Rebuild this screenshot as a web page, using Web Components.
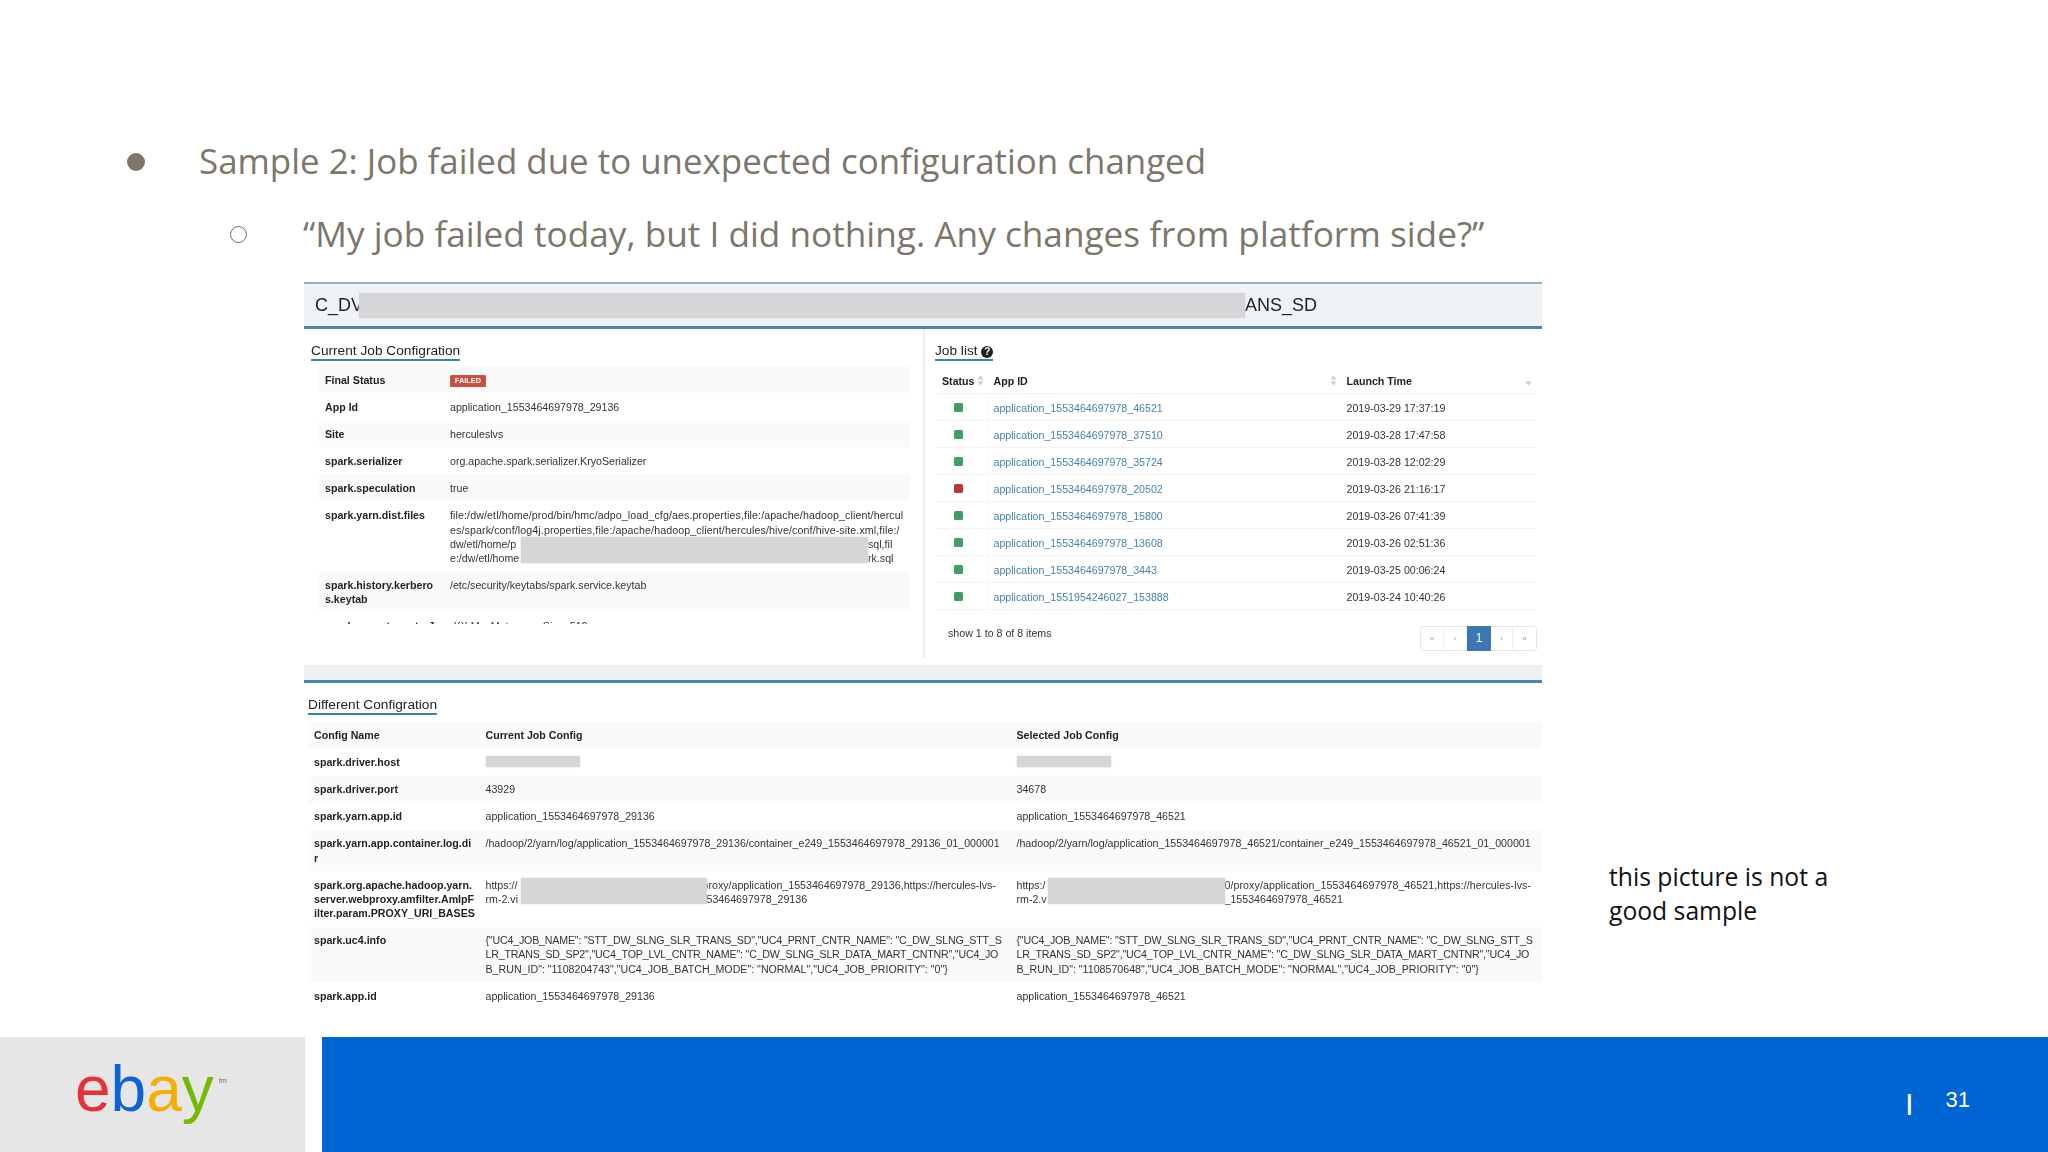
<!DOCTYPE html>
<html lang="en">
<head>
<meta charset="utf-8">
<title>Sample 2</title>
<style>
  html, body { margin: 0; background: #ffffff; }
  .tight { letter-spacing: -0.18px; }
  .loose { letter-spacing: 0.11px; }
</style>
</head>
<body>
<sm-slide>
  <sm-bullet level="1">Sample 2: Job failed due to unexpected configuration changed</sm-bullet>
  <sm-bullet level="2">“My job failed today, but I did nothing. Any changes from platform side?”</sm-bullet>

  <sm-stage>
    <sm-panel>
      <sm-banner>
        <span>C_DV</span>
        <sm-redact slot="mask"></sm-redact>
        <span slot="end">ANS_SD</span>
      </sm-banner>

      <sm-split>
        <sm-pane slot="left">
          <sm-title>Current Job Configration</sm-title>
          <sm-table clip style="--columns: 125px 1fr; --pad-t: 7.35px; --pad-b: 5.35px; margin: 5px 0 0 8px; width: 591px;">
            <sm-row band><sm-cell strong>Final Status</sm-cell><sm-cell><sm-badge>FAILED</sm-badge></sm-cell></sm-row>
            <sm-row><sm-cell strong>App Id</sm-cell><sm-cell>application_1553464697978_29136</sm-cell></sm-row>
            <sm-row band><sm-cell strong>Site</sm-cell><sm-cell>herculeslvs</sm-cell></sm-row>
            <sm-row><sm-cell strong>spark.serializer</sm-cell><sm-cell>org.apache.spark.serializer.KryoSerializer</sm-cell></sm-row>
            <sm-row band><sm-cell strong>spark.speculation</sm-cell><sm-cell>true</sm-cell></sm-row>
            <sm-row>
              <sm-cell strong>spark.yarn.dist.files</sm-cell>
              <sm-cell nowrap><span class="loose">file:/dw/etl/home/prod/bin/hmc/adpo_load_cfg/aes.properties,file:/apache/hadoop_client/hercul<br>es/spark/conf/log4j.properties,file:/apache/hadoop_client/hercules/hive/conf/hive-site.xml,file:/</span><sm-masked style="--mask: 71px 347px auto;">
                <span>dw/etl/home/p</span><sm-redact tall></sm-redact><span>sql,fil</span>
                <span>e:/dw/etl/home</span><span>rk.sql</span>
              </sm-masked></sm-cell>
            </sm-row>
            <sm-row band><sm-cell strong>spark.history.kerbero<br>s.keytab</sm-cell><sm-cell>/etc/security/keytabs/spark.service.keytab</sm-cell></sm-row>
            <sm-row><sm-cell strong>spark.executor.extraJavaO</sm-cell><sm-cell>-XX:MaxMetaspaceSize=512m -</sm-cell></sm-row>
          </sm-table>
        </sm-pane>

        <sm-pane slot="right">
          <sm-title>Job list <sm-help></sm-help></sm-title>
          <sm-table style="--columns: 52.5px 353px 1fr; margin-top: 6.5px; width: 602px;">
            <sm-row rule>
              <sm-cell strong between style="--pad-l: 7px; --pad-r: 4px;">Status<sm-sort></sm-sort></sm-cell>
              <sm-cell strong between style="--pad-r: 4px;">App ID<sm-sort></sm-sort></sm-cell>
              <sm-cell strong between style="--pad-r: 5px;">Launch Time<sm-sort down></sm-sort></sm-cell>
            </sm-row>
            <sm-job-row app="application_1553464697978_46521" time="2019-03-29 17:37:19"></sm-job-row>
            <sm-job-row app="application_1553464697978_37510" time="2019-03-28 17:47:58"></sm-job-row>
            <sm-job-row app="application_1553464697978_35724" time="2019-03-28 12:02:29"></sm-job-row>
            <sm-job-row app="application_1553464697978_20502" time="2019-03-26 21:16:17" failed></sm-job-row>
            <sm-job-row app="application_1553464697978_15800" time="2019-03-26 07:41:39"></sm-job-row>
            <sm-job-row app="application_1553464697978_13608" time="2019-03-26 02:51:36"></sm-job-row>
            <sm-job-row app="application_1553464697978_3443" time="2019-03-25 00:06:24"></sm-job-row>
            <sm-job-row app="application_1551954246027_153888" time="2019-03-24 10:40:26"></sm-job-row>
          </sm-table>
          <sm-table-foot>
            <span>show 1 to 8 of 8 items</span>
            <sm-pager slot="end"></sm-pager>
          </sm-table-foot>
        </sm-pane>
      </sm-split>

      <sm-section>
        <sm-title>Different Configration</sm-title>
        <sm-table style="--columns: 171.5px 531px 531px; margin-top: 7px;">
          <sm-row band><sm-cell strong>Config Name</sm-cell><sm-cell strong>Current Job Config</sm-cell><sm-cell strong>Selected Job Config</sm-cell></sm-row>
          <sm-row>
            <sm-cell strong>spark.driver.host</sm-cell>
            <sm-cell><sm-redact style="width: 94px; height: 11px; margin-top: 1px;"></sm-redact></sm-cell>
            <sm-cell><sm-redact style="width: 94px; height: 11px; margin-top: 1px;"></sm-redact></sm-cell>
          </sm-row>
          <sm-row band><sm-cell strong>spark.driver.port</sm-cell><sm-cell>43929</sm-cell><sm-cell>34678</sm-cell></sm-row>
          <sm-row><sm-cell strong>spark.yarn.app.id</sm-cell><sm-cell>application_1553464697978_29136</sm-cell><sm-cell>application_1553464697978_46521</sm-cell></sm-row>
          <sm-row band>
            <sm-cell strong>spark.yarn.app.container.log.di<br>r</sm-cell>
            <sm-cell>/hadoop/2/yarn/log/application_1553464697978_29136/container_e249_1553464697978_29136_01_000001</sm-cell>
            <sm-cell>/hadoop/2/yarn/log/application_1553464697978_46521/container_e249_1553464697978_46521_01_000001</sm-cell>
          </sm-row>
          <sm-row>
            <sm-cell strong>spark.org.apache.hadoop.yarn.<br>server.webproxy.amfilter.AmIpF<br>ilter.param.PROXY_URI_BASES</sm-cell>
            <sm-cell><sm-masked style="--mask: 35px 186px auto;">
              <span>https://</span><sm-redact tall></sm-redact><span style="margin-left: -4px;">proxy/application_1553464697978_29136,https://hercules-lvs-</span>
              <span>rm-2.vi</span><span>53464697978_29136</span>
            </sm-masked></sm-cell>
            <sm-cell><sm-masked style="--mask: 31px 177px auto;">
              <span>https:/</span><sm-redact tall></sm-redact><span style="letter-spacing: 0.07px;">0/proxy/application_1553464697978_46521,https://hercules-lvs-</span>
              <span>rm-2.v</span><span>_1553464697978_46521</span>
            </sm-masked></sm-cell>
          </sm-row>
          <sm-row band>
            <sm-cell strong>spark.uc4.info</sm-cell>
            <sm-cell nowrap><span class="tight">{"UC4_JOB_NAME": "STT_DW_SLNG_SLR_TRANS_SD","UC4_PRNT_CNTR_NAME": "C_DW_SLNG_STT_S<br>LR_TRANS_SD_SP2","UC4_TOP_LVL_CNTR_NAME": "C_DW_SLNG_SLR_DATA_MART_CNTNR","UC4_JO</span><br>B_RUN_ID": "1108204743","UC4_JOB_BATCH_MODE": "NORMAL","UC4_JOB_PRIORITY": "0"}</sm-cell>
            <sm-cell nowrap><span class="tight">{"UC4_JOB_NAME": "STT_DW_SLNG_SLR_TRANS_SD","UC4_PRNT_CNTR_NAME": "C_DW_SLNG_STT_S<br>LR_TRANS_SD_SP2","UC4_TOP_LVL_CNTR_NAME": "C_DW_SLNG_SLR_DATA_MART_CNTNR","UC4_JO</span><br>B_RUN_ID": "1108570648","UC4_JOB_BATCH_MODE": "NORMAL","UC4_JOB_PRIORITY": "0"}</sm-cell>
          </sm-row>
          <sm-row><sm-cell strong>spark.app.id</sm-cell><sm-cell>application_1553464697978_29136</sm-cell><sm-cell>application_1553464697978_46521</sm-cell></sm-row>
        </sm-table>
      </sm-section>
    </sm-panel>

    <sm-note slot="note">this picture is not a<br>good sample</sm-note>
  </sm-stage>

  <sm-footer slot="footer" page="31"></sm-footer>
</sm-slide>

<script>
// Small helper, every element is only a template and a shadow root
function element( name, html, extra ) {
  const template = document.createElement( 'template' );
  template.innerHTML = html;

  class Base extends HTMLElement {
    constructor() {
      super();
      this.attachShadow( {mode: 'open'} );
      this.shadowRoot.appendChild( template.content.cloneNode( true ) );
    }

    connectedCallback() {
      if( extra ) extra( this );
    }
  }

  window.customElements.define( name, Base );
}

element( 'sm-slide', /* template */ `
  <style>
    :host {
      display: flex;
      flex-direction: column;
      height: 1152px;
      overflow: hidden;
      padding-top: 136px;
      box-sizing: border-box;
      background: #ffffff;
    }
    main { flex: 1; min-height: 0; }
  </style>
  <main><slot></slot></main>
  <slot name="footer"></slot>
` );

element( 'sm-bullet', /* template */ `
  <style>
    :host {
      display: flex;
      align-items: center;
      color: #7d766a;
      font-family: "Open Sans", sans-serif;
      height: 50px;
      line-height: 50px;
      white-space: nowrap;
    }
    :host( [level="1"] ) { font-size: 34.9px; padding-left: 127px; margin-bottom: 22px; }
    :host( [level="2"] ) { font-size: 35.2px; padding-left: 230px; margin-bottom: 24px; }
    i { box-sizing: border-box; border-radius: 50%; flex: none; }
    :host( [level="1"] ) i { width: 18px; height: 18px; background: #7d766a; margin: 2px 54px 0 0; }
    :host( [level="2"] ) i { width: 17px; height: 17px; border: 1px solid #6f695f; margin: 2px 56px 0 0; }
  </style>
  <i></i><slot></slot>
` );

element( 'sm-stage', /* template */ `
  <style>
    :host { display: flex; align-items: flex-start; padding-left: 304px; }
    div { margin: 578px 0 0 67px; }
  </style>
  <slot></slot>
  <div><slot name="note"></slot></div>
` );

element( 'sm-panel', /* template */ `
  <style>
    :host {
      display: block;
      width: 1238px;
      flex: none;
      color: #333333;
      font-family: "Liberation Sans", Arial, sans-serif;
      font-size: 10.65px;
      line-height: 14.3px;
      filter: blur( 0.35px );
    }
  </style>
  <slot></slot>
` );

element( 'sm-banner', /* template */ `
  <style>
    :host {
      display: flex;
      box-sizing: border-box;
      height: 47px;
      align-items: center;
      background: #eef3f7;
      border-top: 2px solid #8fb2ca;
      border-bottom: 3px solid #4f83aa;
      color: #222222;
      font-size: 18px;
      line-height: 24px;
      padding-left: 11px;
    }
    .lead { width: 44px; overflow: hidden; white-space: nowrap; }
    .mask { width: 886px; flex: none; }
    .mask ::slotted( * ) { height: 25px; }
  </style>
  <div class="lead"><slot></slot></div>
  <div class="mask"><slot name="mask"></slot></div>
  <slot name="end"></slot>
` );

element( 'sm-split', /* template */ `
  <style>
    :host { display: flex; height: 336px; }
    .left { width: 619px; height: 329px; flex: none; border-right: 2px solid #eeeeee; }
    .right { flex: 1; min-width: 0; }
  </style>
  <div class="left"><slot name="left"></slot></div>
  <div class="right"><slot name="right"></slot></div>
` );

element( 'sm-pane', /* template */ `
  <style>
    :host { display: block; padding: 14px 0 0 7px; }
    :host( [slot="right"] ) { padding-left: 10px; }
  </style>
  <slot></slot>
` );

element( 'sm-section', /* template */ `
  <style>
    :host {
      display: block;
      border-top: 15px solid #eef1f4;
      padding: 0 0 0 4px;
    }
    hr { border: 0; height: 3px; background: #4f83aa; margin: 0 0 14px -4px; }
  </style>
  <hr>
  <slot></slot>
` );

element( 'sm-title', /* template */ `
  <style>
    :host {
      display: table;
      color: #222222;
      font-size: 13.7px;
      line-height: 16px;
      border-bottom: 2px solid #3583b0;
      white-space: nowrap;
    }
  </style>
  <slot></slot>
` );

element( 'sm-help', /* template */ `
  <style>
    :host {
      display: inline-block;
      width: 12px;
      height: 12px;
      border-radius: 50%;
      background: #222222;
      color: #ffffff;
      font-size: 10px;
      font-weight: bold;
      line-height: 12px;
      text-align: center;
      vertical-align: 0;
    }
  </style>
  ?
` );

element( 'sm-table', /* template */ `
  <style>
    :host { display: block; }
    :host( [clip] ) { height: 258px; overflow: hidden; }
  </style>
  <slot></slot>
` );

element( 'sm-row', /* template */ `
  <style>
    :host { display: grid; grid-template-columns: var( --columns ); }
    :host( [band] ) { background: #fafafa; }
    :host( [rule] ) { box-shadow: inset 0 -1px 0 #f4f4f4; }
  </style>
  <slot></slot>
` );

element( 'sm-cell', /* template */ `
  <style>
    :host {
      display: block;
      min-width: 0;
      padding: var( --pad-t, 6.35px ) var( --pad-r, 4px ) var( --pad-b, 6.35px ) var( --pad-l, 6px );
      overflow-wrap: anywhere;
    }
    :host( [strong] ) { color: #222222; font-weight: bold; }
    :host( [between] ) { display: flex; align-items: center; justify-content: space-between; }
    :host( [center] ) { display: flex; align-items: center; justify-content: center; }
    :host( [rule] ) { box-shadow: inset -1px 0 0 #f6f6f6; }
    :host( [link] ) { color: #4583ad; }
    :host( [nowrap] ) { white-space: nowrap; }
  </style>
  <slot></slot>
` );

// One job of the list, the cells are built from its attributes
element( 'sm-job-row', /* template */ `
  <style>
    :host { display: block; }
    .status { --pad-l: 4px; --pad-r: 9px; }
  </style>
  <sm-row rule>
    <sm-cell class="status" center rule><sm-status></sm-status></sm-cell>
    <sm-cell link></sm-cell>
    <sm-cell></sm-cell>
  </sm-row>
`, ( host ) => {
  const cells = host.shadowRoot.querySelectorAll( 'sm-cell' );
  cells[1].textContent = host.getAttribute( 'app' );
  cells[2].textContent = host.getAttribute( 'time' );

  if( host.hasAttribute( 'failed' ) ) {
    host.shadowRoot.querySelector( 'sm-status' ).setAttribute( 'failed', '' );
  }
} );

element( 'sm-status', /* template */ `
  <style>
    :host { display: block; width: 9px; height: 9px; border-radius: 1.5px; background: #3f9e63; }
    :host( [failed] ) { background: #b8392c; }
  </style>
` );

element( 'sm-sort', /* template */ `
  <style>
    :host { display: block; flex: none; width: 7px; height: 11px; }
    svg { display: block; }
    :host( [down] ) .up { display: none; }
  </style>
  <svg width="7" height="11" viewBox="0 0 7 11" fill="#c9cbce">
    <path class="up" d="M3.5 0.5 L6.5 4.5 L0.5 4.5 Z"></path>
    <path d="M0.5 6.5 L6.5 6.5 L3.5 10.5 Z"></path>
  </svg>
` );

element( 'sm-badge', /* template */ `
  <style>
    :host {
      display: block;
      width: 36px;
      height: 12px;
      border-radius: 1.5px;
      background: #cb4f3e;
      color: #ffffff;
      font-size: 7.4px;
      font-weight: bold;
      line-height: 12px;
      text-align: center;
      margin-top: 2px;
    }
  </style>
  <slot></slot>
` );

element( 'sm-redact', /* template */ `
  <style>
    :host {
      display: block;
      position: relative;
      z-index: 1;
      background: #d6d6d8;
      box-shadow: 0 0 2px #dcdcde;
    }
    :host( [tall] ) { grid-row: span 2; height: 26px; }
  </style>
` );

// Two lines of text with a grey box laid over the middle of them
element( 'sm-masked', /* template */ `
  <style>
    :host {
      display: grid;
      grid-template-columns: var( --mask );
      grid-auto-rows: 14.3px;
      white-space: nowrap;
    }
    ::slotted( span ) { overflow: hidden; }
  </style>
  <slot></slot>
` );

element( 'sm-table-foot', /* template */ `
  <style>
    :host {
      display: flex;
      justify-content: space-between;
      padding: 16px 0 0 13px;
      width: 589px;
    }
  </style>
  <slot></slot>
  <slot name="end"></slot>
` );

element( 'sm-pager', /* template */ `
  <style>
    :host {
      display: flex;
      height: 25px;
      box-sizing: border-box;
      border: 1px solid #e6e6e6;
      border-radius: 3px;
      color: #9a9a9a;
      font-size: 8px;
      line-height: 23px;
      text-align: center;
    }
    span { box-sizing: border-box; border-right: 1px solid #eeeeee; }
    span:last-child { border-right: 0; }
    .active {
      background: #3c78b4;
      border: 0;
      color: #ffffff;
      font-size: 12px;
      margin: -1px 0;
      line-height: 25px;
    }
  </style>
  <span style="width: 23px;">«</span>
  <span style="width: 23px;">‹</span>
  <span class="active" style="width: 24px;">1</span>
  <span style="width: 22px;">›</span>
  <span style="width: 23px;">»</span>
` );

element( 'sm-note', /* template */ `
  <style>
    :host {
      display: block;
      color: #111111;
      font-family: "Open Sans", sans-serif;
      font-size: 24.7px;
      line-height: 34px;
      white-space: nowrap;
    }
  </style>
  <slot></slot>
` );

element( 'sm-logo', /* template */ `
  <style>
    :host {
      display: block;
      color: #e53238;
      font-family: "Liberation Sans", Arial, sans-serif;
      font-size: 64px;
      line-height: 64px;
      padding: 20px 0 0 75px;
      white-space: nowrap;
    }
    .b { color: #0e64d2; }
    .a { color: #f5af02; }
    .y { color: #76b900; }
    sup {
      color: #777777;
      font-size: 7px;
      line-height: 0;
      vertical-align: 28px;
      margin-left: 5px;
    }
  </style>
  <span>e</span><span class="b">b</span><span class="a">a</span><span class="y">y</span><sup>tm</sup>
` );

element( 'sm-footer', /* template */ `
  <style>
    :host { display: flex; height: 115px; flex: none; }
    .brand { width: 305px; background: #e6e6e6; margin-right: 17px; flex: none; }
    .bar {
      flex: 1;
      display: flex;
      justify-content: flex-end;
      background: #0064d2;
      color: #ffffff;
      font-family: "Liberation Sans", Arial, sans-serif;
      font-size: 22px;
      line-height: 26px;
      padding: 50px 78px 0 0;
    }
    .sep { font-weight: bold; margin: 3px 33px 0 0; }
  </style>
  <div class="brand"><sm-logo></sm-logo></div>
  <div class="bar"><span class="sep">|</span><span class="page"></span></div>
`, ( host ) => {
  host.shadowRoot.querySelector( '.page' ).textContent = host.getAttribute( 'page' );
} );
</script>
</body>
</html>
